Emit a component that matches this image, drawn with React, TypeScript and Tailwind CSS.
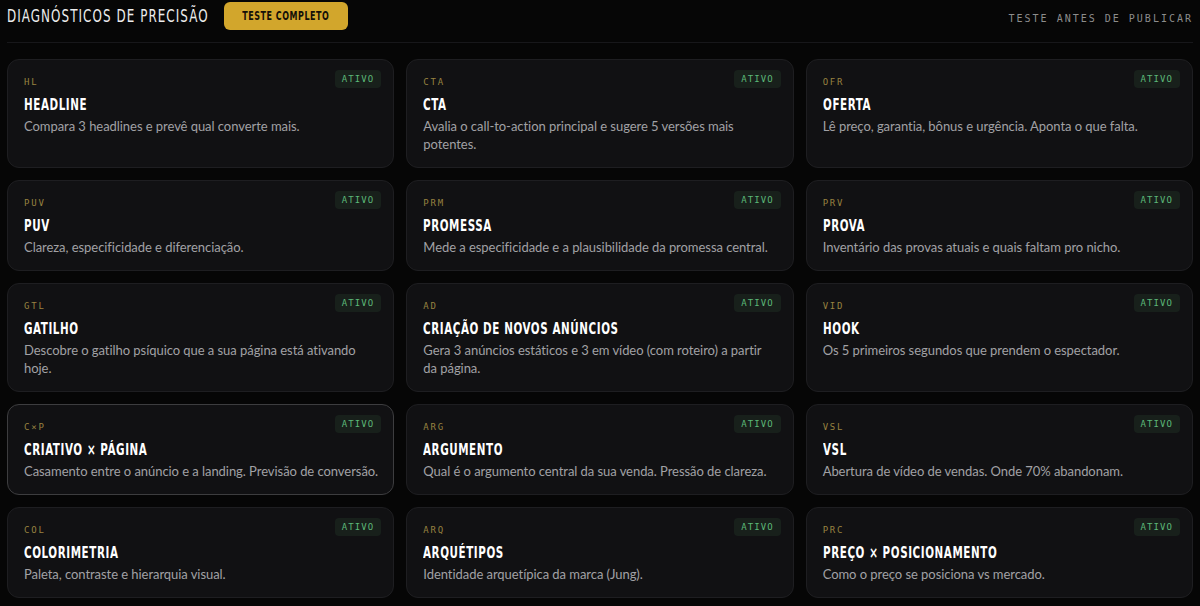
import React from "react";

type Diag = { code: string; title: string; desc: string; focused?: boolean; narrow?: boolean };

const items: Diag[] = [
  { code: "HL", title: "HEADLINE", desc: "Compara 3 headlines e prevê qual converte mais." },
  { code: "CTA", title: "CTA", desc: "Avalia o call-to-action principal e sugere 5 versões mais potentes." },
  { code: "OFR", title: "OFERTA", desc: "Lê preço, garantia, bônus e urgência. Aponta o que falta." },
  { code: "PUV", title: "PUV", desc: "Clareza, especificidade e diferenciação." },
  { code: "PRM", title: "PROMESSA", desc: "Mede a especificidade e a plausibilidade da promessa central." },
  { code: "PRV", title: "PROVA", desc: "Inventário das provas atuais e quais faltam pro nicho." },
  { code: "GTL", title: "GATILHO", desc: "Descobre o gatilho psíquico que a sua página está ativando hoje." },
  { code: "AD", title: "CRIAÇÃO DE NOVOS ANÚNCIOS", desc: "Gera 3 anúncios estáticos e 3 em vídeo (com roteiro) a partir da página.", narrow: true },
  { code: "VID", title: "HOOK", desc: "Os 5 primeiros segundos que prendem o espectador." },
  { code: "C×P", title: "CRIATIVO × PÁGINA", desc: "Casamento entre o anúncio e a landing. Previsão de conversão.", focused: true },
  { code: "ARG", title: "ARGUMENTO", desc: "Qual é o argumento central da sua venda. Pressão de clareza." },
  { code: "VSL", title: "VSL", desc: "Abertura de vídeo de vendas. Onde 70% abandonam." },
  { code: "COL", title: "COLORIMETRIA", desc: "Paleta, contraste e hierarquia visual." },
  { code: "ARQ", title: "ARQUÉTIPOS", desc: "Identidade arquetípica da marca (Jung)." },
  { code: "PRC", title: "PREÇO × POSICIONAMENTO", desc: "Como o preço se posiciona vs mercado." },
];

// no condensed face installed, so the DejaVu condensed is squeezed with scale-x
const cond = "font-['DejaVu_Sans_Condensed','Liberation_Sans',sans-serif]";
const mono = "font-['DejaVu_Sans_Mono','Liberation_Mono',monospace]";
const body = "font-['Lato','Inter',sans-serif]";

const Card: React.FC<{ d: Diag }> = ({ d }) => (
  <div
    className={`relative rounded-xl border bg-[#111113] pt-4 pr-[14px] pb-[14px] pl-4 ${
      d.focused ? "border-[#3d3d3f]" : "border-[#1e1e21]"
    }`}
  >
    <span
      className={`absolute right-3 top-[10px] rounded bg-[#18201b] px-[7px] py-[3px] text-[9px] leading-3 tracking-[0.12em] text-[#5cb878] ${mono}`}
    >
      ATIVO
    </span>
    <p className={`text-[9px] leading-3 tracking-[0.2em] text-[#978240] ${mono}`}>{d.code}</p>
    <h3
      className={`mt-2 origin-left scale-x-[0.72] whitespace-nowrap text-[16px] font-bold leading-[18px] tracking-[0.05em] text-white ${cond}`}
    >
      {d.title}
    </h3>
    <p
      className={`mt-[3px] text-[13px] leading-[18px] tracking-[-0.004em] text-[#a1a1a5] ${body} ${
        d.narrow ? "max-w-[345px]" : ""
      }`}
    >
      {d.desc}
    </p>
  </div>
);

export default function App() {
  return (
    <div className="min-h-[606px] w-[1200px] bg-[#060606] px-[7px]">
      <div className="flex h-[43px] items-start justify-between border-b border-[#17171a] pt-[2px]">
        <div className="flex items-center gap-[17px]">
          <h1
            className={`w-[200px] origin-left scale-x-[0.78] whitespace-nowrap text-[17px] leading-7 tracking-[0.08em] text-[#ececec] ${cond}`}
          >
            DIAGNÓSTICOS DE PRECISÃO
          </h1>
          <button className="flex h-7 w-[124px] items-center justify-center rounded-md bg-[#d2a62c]">
            <span
              className={`scale-x-[0.74] whitespace-nowrap text-[12px] font-bold tracking-[0.06em] text-[#141008] ${cond}`}
            >
              TESTE COMPLETO
            </span>
          </button>
        </div>
        <span className={`mt-[9px] text-[10px] tracking-[0.2em] text-[#8c8c8c] ${mono}`}>
          TESTE ANTES DE PUBLICAR
        </span>
      </div>
      <div className="mt-4 grid grid-cols-3 gap-3">
        {items.map((d) => (
          <Card key={d.code} d={d} />
        ))}
      </div>
    </div>
  );
}
